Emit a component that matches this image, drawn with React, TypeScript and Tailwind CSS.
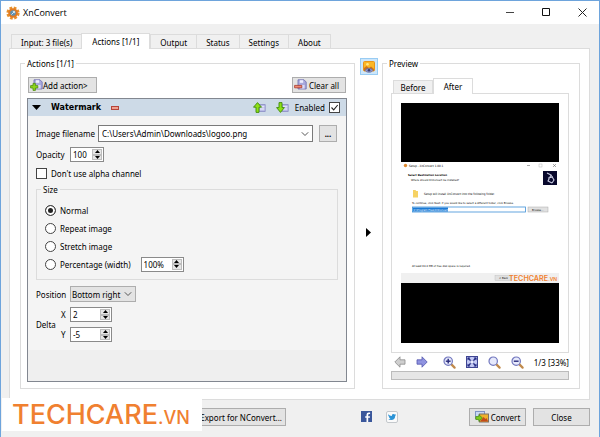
import { useState } from "react";
import type { ReactNode } from "react";

const mainTabs = ["Input: 3 file(s)", "Actions [1/1]", "Output", "Status", "Settings", "About"];
const sizeModes = ["Normal", "Repeat image", "Stretch image", "Percentage (width)"];

/* Icons */
const AppIcon = () => (
  <svg viewBox="0 0 14 14" className="h-3.5 w-3.5 shrink-0">
    <circle cx="7" cy="7" r="5.2" fill="none" stroke="#e8912c" strokeWidth="2.8" strokeDasharray="2.6 1.5" />
    <circle cx="7" cy="7" r="4.8" fill="#e07a22" />
    <circle cx="7" cy="7" r="2.8" fill="#5b8fb0" />
    <path d="M5.4 8.6 8.6 5.4M8.6 7.2V5.4H6.8" stroke="#d8e8f0" strokeWidth="1" fill="none" />
  </svg>
);

const DiskShape = () => (
  <>
    <path d="M4 .8h6l2.2 2.2v7H4z" fill="#a9a9dd" stroke="#6c6cae" strokeWidth=".8" />
    <path d="M5.8 1.2h3.4v2.6H5.8z" fill="#eef" />
    <path d="M6 6h4.6v3.6H6z" fill="#dcdcf6" />
  </>
);

const AddIcon = () => (
  <svg viewBox="0 0 13 12" className="h-3 w-[13px] shrink-0">
    <DiskShape />
    <path d="M3 4.4h2.4v2.2h2.4V9H5.4v2.4H3V9H.6V6.6H3z" fill="#8fd51c" stroke="#4c8d10" strokeWidth=".8" />
  </svg>
);

const ClearIcon = () => (
  <svg viewBox="0 0 13 12" className="h-3 w-[13px] shrink-0">
    <DiskShape />
    <path d="M.6 6.4h7.2v2.4H.6z" fill="#ef8a76" stroke="#a83a2c" strokeWidth=".8" />
  </svg>
);

const MoveIcon = ({ down = false }: { down?: boolean }) => (
  <svg viewBox="0 0 13 11" className="h-[11px] w-[13px]">
    <path d="M6 2.5h6.2v7H6z" fill="#b9bce6" stroke="#8a8cc4" strokeWidth=".8" />
    <path d="M7 4.8h4.4M7 7h4.4" stroke="#f2f2ff" />
    <path
      d={down ? "M3 .6h3v5h2.4L4.5 10.4.6 5.6H3z" : "M4.5.6l4 4.6H6v5.2H3V5.2H.5z"}
      fill="#8ee016"
      stroke="#3f8a0c"
      strokeWidth=".9"
    />
  </svg>
);

const PreviewIcon = () => (
  <svg viewBox="0 0 12 12" className="h-3 w-3">
    <rect x=".5" y=".5" width="11" height="9.5" rx="1" fill="#fbb726" stroke="#e8941a" />
    <path d="M1 10V7l2.5-2L6 7l2-1.4L11 8v2z" fill="#d0751a" />
    <circle cx="4.5" cy="3.2" r="1.3" fill="#ffe98a" />
    <path d="M2 9.4C4 6.6 8 6.6 10 9.4 8 12 4 12 2 9.4z" fill="#8e97cf" stroke="#5a6194" strokeWidth=".6" />
    <circle cx="6" cy="9.3" r="1.3" fill="#39406e" />
  </svg>
);

const ArrowIcon = ({ back = false }: { back?: boolean }) => (
  <svg viewBox="0 0 12 12" className="h-3 w-3">
    <path
      d={back ? "M.8 6 6 .8v3h5v4.4H6v3z" : "M11.2 6 6 .8v3H1v4.4h5v3z"}
      fill={back ? "#cfcfcf" : "#8f93e0"}
      stroke={back ? "#8c8c8c" : "#5457ad"}
      strokeWidth=".8"
    />
  </svg>
);

const ZoomIcon = ({ sign = "" }: { sign?: string }) => (
  <svg viewBox="0 0 13 13" className="h-[13px] w-[13px]">
    <path d="M8.4 8.4 11.6 11.6" stroke="#c08a4c" strokeWidth="2.2" strokeLinecap="round" />
    <circle cx="5.2" cy="5.2" r="4.2" fill="#e6e9fb" stroke="#7277be" strokeWidth="1.2" />
    {sign !== "" && <path d="M2.8 5.2h4.8" stroke="#26297a" strokeWidth="1.4" />}
    {sign === "+" && <path d="M5.2 2.8v4.8" stroke="#26297a" strokeWidth="1.4" />}
  </svg>
);

const FitIcon = () => (
  <svg viewBox="0 0 12 12" className="h-3 w-3">
    <rect x=".5" y=".5" width="11" height="11" fill="#c3c9f4" stroke="#3f4593" />
    <path d="M2 2l8 8M10 2l-8 8" stroke="#252c84" strokeWidth="1.4" />
    <path d="M1.5 4.5v-3h3zM7.5 1.5h3v3zM10.5 7.5v3h-3zM4.5 10.5h-3v-3z" fill="#252c84" />
    <rect x="4.5" y="4.5" width="3" height="3" fill="#e8ebff" />
  </svg>
);

const FacebookIcon = () => (
  <svg viewBox="0 0 11 11" className="h-[11px] w-[11px]">
    <rect width="11" height="11" fill="#3a579b" />
    <path d="M7.2 11V6.8h1.7V5.2H7.2V4q0-1 1-1h.9V1.5H7.7Q5.5 1.5 5.5 3.8v1.4H4.2v1.6h1.3V11z" fill="#fff" />
  </svg>
);

const TwitterIcon = () => (
  <svg viewBox="0 0 12 12" className="h-3 w-3">
    <rect x=".5" y=".5" width="11" height="11" rx="1.5" fill="#fafafa" stroke="#c4c8cc" />
    <path
      d="M2.2 3.2Q3.7 5 5.8 4.9 5.6 3 7.4 2.9q.8 0 1.3.6l1.2-.4-.7 1.1.8-.1-.8.9Q9 9 5.2 9.1 3.3 9 2.2 8.3q1.5 0 2.2-.8-1.2-.2-1.5-1.3h.7Q2.3 5.4 2.3 4.5z"
      fill="#2b93d6"
    />
  </svg>
);

const ConvertIcon = () => (
  <svg viewBox="0 0 14 12" className="h-3 w-3.5 shrink-0">
    <rect x=".5" y=".5" width="9" height="7" fill="#c9d8f4" stroke="#7f93c4" />
    <rect x="4.5" y="3" width="9" height="8" fill="#f0b02c" stroke="#7d7264" />
    <path d="M5 10.6 8.5 6l2 2 1-1 1.6 3.6z" fill="#c34a1c" />
    <path d="M.8 5.5h3V3.6L7.4 7 3.8 10.4V8.5h-3z" fill="#7dcc1a" stroke="#43850f" strokeWidth=".7" />
  </svg>
);

const Chevron = () => (
  <svg viewBox="0 0 8 5" className="pointer-events-none absolute top-1/2 right-1 h-[5px] w-2 -translate-y-1/2">
    <path d="M.8.8 4 4 7.2.8" fill="none" stroke="#555" strokeWidth="1" />
  </svg>
);

/* Shared controls */
const PushButton = ({ children, className = "" }: { children: ReactNode; className?: string }) => (
  <button className={`flex items-center border border-[#adadad] bg-[#e3e3e3] whitespace-nowrap ${className}`}>
    {children}
  </button>
);

const Spinner = ({ id, label, value, className }: { id: string; label: string; value: string; className: string }) => (
  <span className={`flex h-[15px] border border-[#8a8a8a] bg-white p-px ${className}`}>
    <input id={id} aria-label={label} defaultValue={value} className="w-0 min-w-0 flex-1 pl-px outline-none" />
    <span className="flex w-[10px] flex-col bg-[#e6e6e6]">
      <button aria-label={`${label} up`} className="flex flex-1 items-center justify-center border border-[#bdbdbd]">
        <svg viewBox="0 0 5 3" className="h-[3px] w-[5px]"><path d="M0 3 2.5 0 5 3z" /></svg>
      </button>
      <button aria-label={`${label} down`} className="flex flex-1 items-center justify-center border border-[#bdbdbd]">
        <svg viewBox="0 0 5 3" className="h-[3px] w-[5px]"><path d="M0 0h5L2.5 3z" /></svg>
      </button>
    </span>
  </span>
);

const CheckBox = ({ id, checked = false }: { id: string; checked?: boolean }) => (
  <span className="relative h-[11px] w-[11px]">
    <input
      id={id}
      type="checkbox"
      defaultChecked={checked}
      className="peer block h-[11px] w-[11px] appearance-none border border-[#444] bg-white"
    />
    <svg viewBox="0 0 11 11" className="pointer-events-none absolute inset-0 hidden h-[11px] w-[11px] peer-checked:block">
      <path d="M2.5 5.5 4.7 7.8 8.7 3" fill="none" stroke="#222" strokeWidth="1.1" />
    </svg>
  </span>
);

/* Image shown in the preview pane */
const PreviewImage = () => (
  <svg viewBox="0 0 158 240" className="block w-full" fontFamily="'DejaVu Sans Condensed', 'DejaVu Sans', sans-serif" fontSize="2.8">
    <rect width="158" height="240" fill="#000" />
    <rect y="59" width="158" height="121" fill="#fff" />
    <rect y="170" width="158" height="10" fill="#f0f0f0" />
    <circle cx="4.5" cy="62.5" r="1.7" fill="#e08a30" />
    <text x="8" y="64" fontSize="3">Setup - XnConvert 1.80.1</text>
    <path d="M126 62.5h3M152 61l3 3M155 61l-3 3" stroke="#555" strokeWidth=".5" />
    <rect x="138" y="61" width="3" height="3" fill="none" stroke="#aaa" strokeWidth=".4" />
    <text x="7" y="73" fontWeight="bold">Select Destination Location</text>
    <text x="10" y="77.5">Where should XnConvert be installed?</text>
    <rect x="142" y="68" width="14" height="14" fill="#08082c" />
    <path d="M146 70l4 2-3 6 4 2M150 72l3 5-2 3M147 75l5-1" stroke="#c9cbe2" strokeWidth="1.1" fill="none" />
    <path d="M12 87h2.5l.7 1H17v6.5h-5z" fill="#f6d264" />
    <text x="23" y="92" fontSize="3">Setup will install XnConvert into the following folder.</text>
    <text x="11" y="101">
      To continue, click Next. If you would like to select a different folder, click Browse.
    </text>
    <rect x="11.5" y="104" width="113" height="5" fill="#fff" stroke="#3c8fd8" strokeWidth=".8" />
    <rect x="12" y="104.5" width="35" height="4" fill="#1b7ad6" />
    <text x="12.5" y="107.5" fill="#fff">C:\Program Files\XnConvert</text>
    <rect x="127" y="104" width="20" height="5" fill="#e1e1e1" stroke="#aaa" strokeWidth=".5" />
    <text x="131" y="107.5">Browse...</text>
    <text x="11" y="164">At least 64.4 MB of free disk space is required.</text>
    <rect x="94" y="172.5" width="16" height="5" fill="#e1e1e1" stroke="#bbb" strokeWidth=".4" />
    <text x="98" y="176">&lt; Back</text>
    <text x="108" y="178" fill="#f07f2e" fontFamily="Inter, sans-serif" fontWeight="600" fontSize="7.2">
      TECHCARE<tspan fontSize="5">.VN</tspan>
    </text>
  </svg>
);

const WatermarkAction = () => (
  <div className="mt-[5px] flex flex-1 flex-col border border-[#828790] bg-[#efefef]">
    <div className="flex h-[17px] items-center bg-[#cddae7] pr-1.5 pl-1">
      <svg viewBox="0 0 9 5" className="h-[5px] w-[9px]"><path d="M0 0h9L4.5 5z" /></svg>
      <b className="ml-2.5 font-['DejaVu_Sans',sans-serif]">Watermark</b>
      <button aria-label="Remove action" className="ml-2.5 h-1 w-2 border border-[#b5443a] bg-[#f0a090]" />
      <span className="ml-auto flex items-center">
        <button aria-label="Move up"><MoveIcon /></button>
        <button aria-label="Move down" className="ml-2.5"><MoveIcon down /></button>
        <label htmlFor="enabled" className="mr-1 ml-1.5">Enabled</label>
        <CheckBox id="enabled" checked />
      </span>
    </div>
    <div className="bg-[#f4f4f4] px-2 pt-[9px] pb-2">
      <div className="flex items-center">
        <label htmlFor="filename" className="w-[62px]">Image filename</label>
        <span className="relative flex-1">
          <select id="filename" className="block h-[17px] w-full appearance-none border border-[#7a7a7a] bg-white px-[3px]">
            <option>C:\Users\Admin\Downloads\logoo.png</option>
          </select>
          <Chevron />
        </span>
        <PushButton className="mr-px ml-1.5 h-[17px] w-[18px] justify-center font-bold">...</PushButton>
      </div>
      <div className="mt-[5px] flex items-center">
        <label htmlFor="opacity" className="w-[34px]">Opacity</label>
        <Spinner id="opacity" label="Opacity value" value="100" className="w-[34px]" />
      </div>
      <div className="mt-[5px] flex h-3 items-center gap-1">
        <CheckBox id="alpha" />
        <label htmlFor="alpha">Don't use alpha channel</label>
      </div>
      <fieldset className="mt-[5px] border border-[#dcdcdc] px-2 pt-1.5 pb-1.5">
        <legend className="-ml-1 px-0.5">Size</legend>
        {sizeModes.map((mode, i) => (
          <div key={mode} className="flex h-[18px] items-center">
            <input
              id={`size-${i}`}
              type="radio"
              name="size"
              defaultChecked={i === 0}
              className="h-[11px] w-[11px] appearance-none rounded-full border border-[#444] bg-white checked:bg-[#222] checked:shadow-[inset_0_0_0_2px_#fff]"
            />
            <label htmlFor={`size-${i}`} className="ml-1">{mode}</label>
            {i === 3 && (
              <span className="ml-2.5">
                <Spinner id="percentage" label="Percentage value" value="100%" className="w-[43px]" />
              </span>
            )}
          </div>
        ))}
      </fieldset>
      <div className="mt-1.5 flex items-center">
        <label htmlFor="position" className="w-[34px]">Position</label>
        <span className="relative w-[66px]">
          <select id="position" className="block h-4 w-full appearance-none border border-[#adadad] bg-[#e3e3e3] px-px">
            <option>Bottom right</option>
          </select>
          <Chevron />
        </span>
      </div>
      <div className="mt-[5px] flex items-center">
        <span className="w-[25px]">Delta</span>
        <div className="flex flex-col gap-[5px]">
          <div className="flex items-center">
            <label htmlFor="delta-x" className="w-[9px]">X</label>
            <Spinner id="delta-x" label="Delta X" value="2" className="w-[42px]" />
          </div>
          <div className="flex items-center">
            <label htmlFor="delta-y" className="w-[9px]">Y</label>
            <Spinner id="delta-y" label="Delta Y" value="-5" className="w-[42px]" />
          </div>
        </div>
      </div>
    </div>
    <div className="flex-1" />
  </div>
);

const PreviewPanel = () => (
  <fieldset className="flex w-[198px] flex-col border border-[#dcdcdc] pt-[9px] pr-2.5 pb-2 pl-2">
    <legend className="-ml-1 px-0.5">Preview</legend>
    <div role="tablist" className="flex h-4 items-end pl-0.5">
      <button role="tab" className="h-3.5 w-10 border border-b-0 border-[#dcdcdc] bg-[#f0f0f0]">Before</button>
      <button role="tab" aria-selected className="relative z-10 h-4 w-10 border border-b-0 border-[#dcdcdc] bg-white">
        After
      </button>
    </div>
    <div className="-mt-px border border-[#dcdcdc] p-[9px]">
      <PreviewImage />
    </div>
    <div className="flex h-[18px] items-center pl-[3px]">
      <button aria-label="Previous"><ArrowIcon back /></button>
      <button aria-label="Next" className="ml-2.5"><ArrowIcon /></button>
      <button aria-label="Zoom in" className="ml-[15px]"><ZoomIcon sign="+" /></button>
      <button aria-label="Fit" className="ml-2.5"><FitIcon /></button>
      <button aria-label="Actual size" className="ml-2.5"><ZoomIcon /></button>
      <button aria-label="Zoom out" className="ml-2.5"><ZoomIcon sign="-" /></button>
      <span className="ml-auto whitespace-nowrap">1/3 [33%]</span>
    </div>
    <div role="progressbar" className="h-[9px] border border-[#bcbcbc] bg-[#e6e6e6]" />
  </fieldset>
);

export default function App() {
  const [tab, setTab] = useState(1);

  return (
    <div className="w-full border border-[#6ea4dc] border-b-[#55a5ee] bg-[#f0f0f0] font-['Noto_Sans',sans-serif] text-[8px] leading-[11px] text-black">
      {/* Title bar */}
      <header className="flex h-[23px] items-center bg-white pr-3 pl-[5px]">
        <AppIcon />
        <h1 className="ml-[3px] font-['Open_Sans',sans-serif] text-[9px]">XnConvert</h1>
        <div className="ml-auto flex items-center gap-[27px]">
          <button aria-label="Minimize">
            <svg viewBox="0 0 9 9" className="h-[9px] w-[9px]"><path d="M0 4.5h8" stroke="#444" /></svg>
          </button>
          <button aria-label="Maximize">
            <svg viewBox="0 0 9 9" className="h-[9px] w-[9px]"><path d="M.5.5h7v7h-7z" fill="none" stroke="#111" /></svg>
          </button>
          <button aria-label="Close window">
            <svg viewBox="0 0 9 9" className="h-[9px] w-[9px]"><path d="M.5.5l8 8M8.5.5l-8 8" stroke="#222" /></svg>
          </button>
        </div>
      </header>

      <main className="pt-[9px] pr-[9px] pl-2">
        <div role="tablist" className="flex h-4 items-end pl-0.5">
          {mainTabs.map((name, i) => (
            <button
              key={name}
              role="tab"
              aria-selected={tab === i}
              onClick={() => setTab(i)}
              className={
                tab === i
                  ? "relative z-10 h-4 border border-b-0 border-[#dcdcdc] bg-white px-2.5"
                  : "-mr-px h-[15px] border border-b-0 border-[#dcdcdc] px-[9px]"
              }
            >
              {name}
            </button>
          ))}
        </div>

        <div className="-mt-px flex border border-[#dcdcdc] bg-white pt-[9px] pr-[9px] pb-2.5 pl-2.5">
          <fieldset className="flex min-w-0 flex-1 flex-col border border-[#dcdcdc] pt-2 pr-[7px] pb-1.5 pl-1.5">
            <legend className="-ml-0.5 px-0.5">Actions [1/1]</legend>
            <div className="flex justify-between px-px">
              <PushButton className="h-4 pr-2 pl-px"><AddIcon />Add action&gt;</PushButton>
              <PushButton className="h-4 gap-0.5 pr-1.5 pl-px"><ClearIcon />Clear all</PushButton>
            </div>
            <WatermarkAction />
          </fieldset>

          <div className="flex w-[27px] flex-col items-center">
            <button aria-label="Show preview" className="flex h-[17px] w-[18px] items-center justify-center border border-[#99ccf3] bg-[#cce6fb]">
              <PreviewIcon />
            </button>
            <button aria-label="Collapse preview" className="flex flex-1 items-center">
              <svg viewBox="0 0 5 9" className="h-[9px] w-[5px]"><path d="M0 0v9l5-4.5z" /></svg>
            </button>
          </div>

          <PreviewPanel />
        </div>
      </main>

      <footer className="relative flex h-[37px] items-start pt-2 pr-[9px] pl-[190px]">
        <PushButton className="h-[18px] w-[95px] justify-end pr-[3px]">Export for NConvert...</PushButton>
        <a href="#" aria-label="Facebook" className="mt-[3px] ml-[75px]"><FacebookIcon /></a>
        <a href="#" aria-label="Twitter" className="mt-[3px] ml-3.5"><TwitterIcon /></a>
        <PushButton className="ml-auto h-[18px] w-[57px] justify-center gap-0.5"><ConvertIcon />Convert</PushButton>
        <PushButton className="ml-[7px] h-[18px] w-[57px] justify-center">Close</PushButton>
        {/* Site badge */}
        <div className="absolute -top-0.5 left-px h-[33px] w-[200px] bg-white pl-2.5 font-['Inter',sans-serif] text-[27px] leading-[34px] font-medium text-[#f08030]">
          <p>TECHCARE<span className="text-[18px]">.VN</span></p>
        </div>
      </footer>
    </div>
  );
}
